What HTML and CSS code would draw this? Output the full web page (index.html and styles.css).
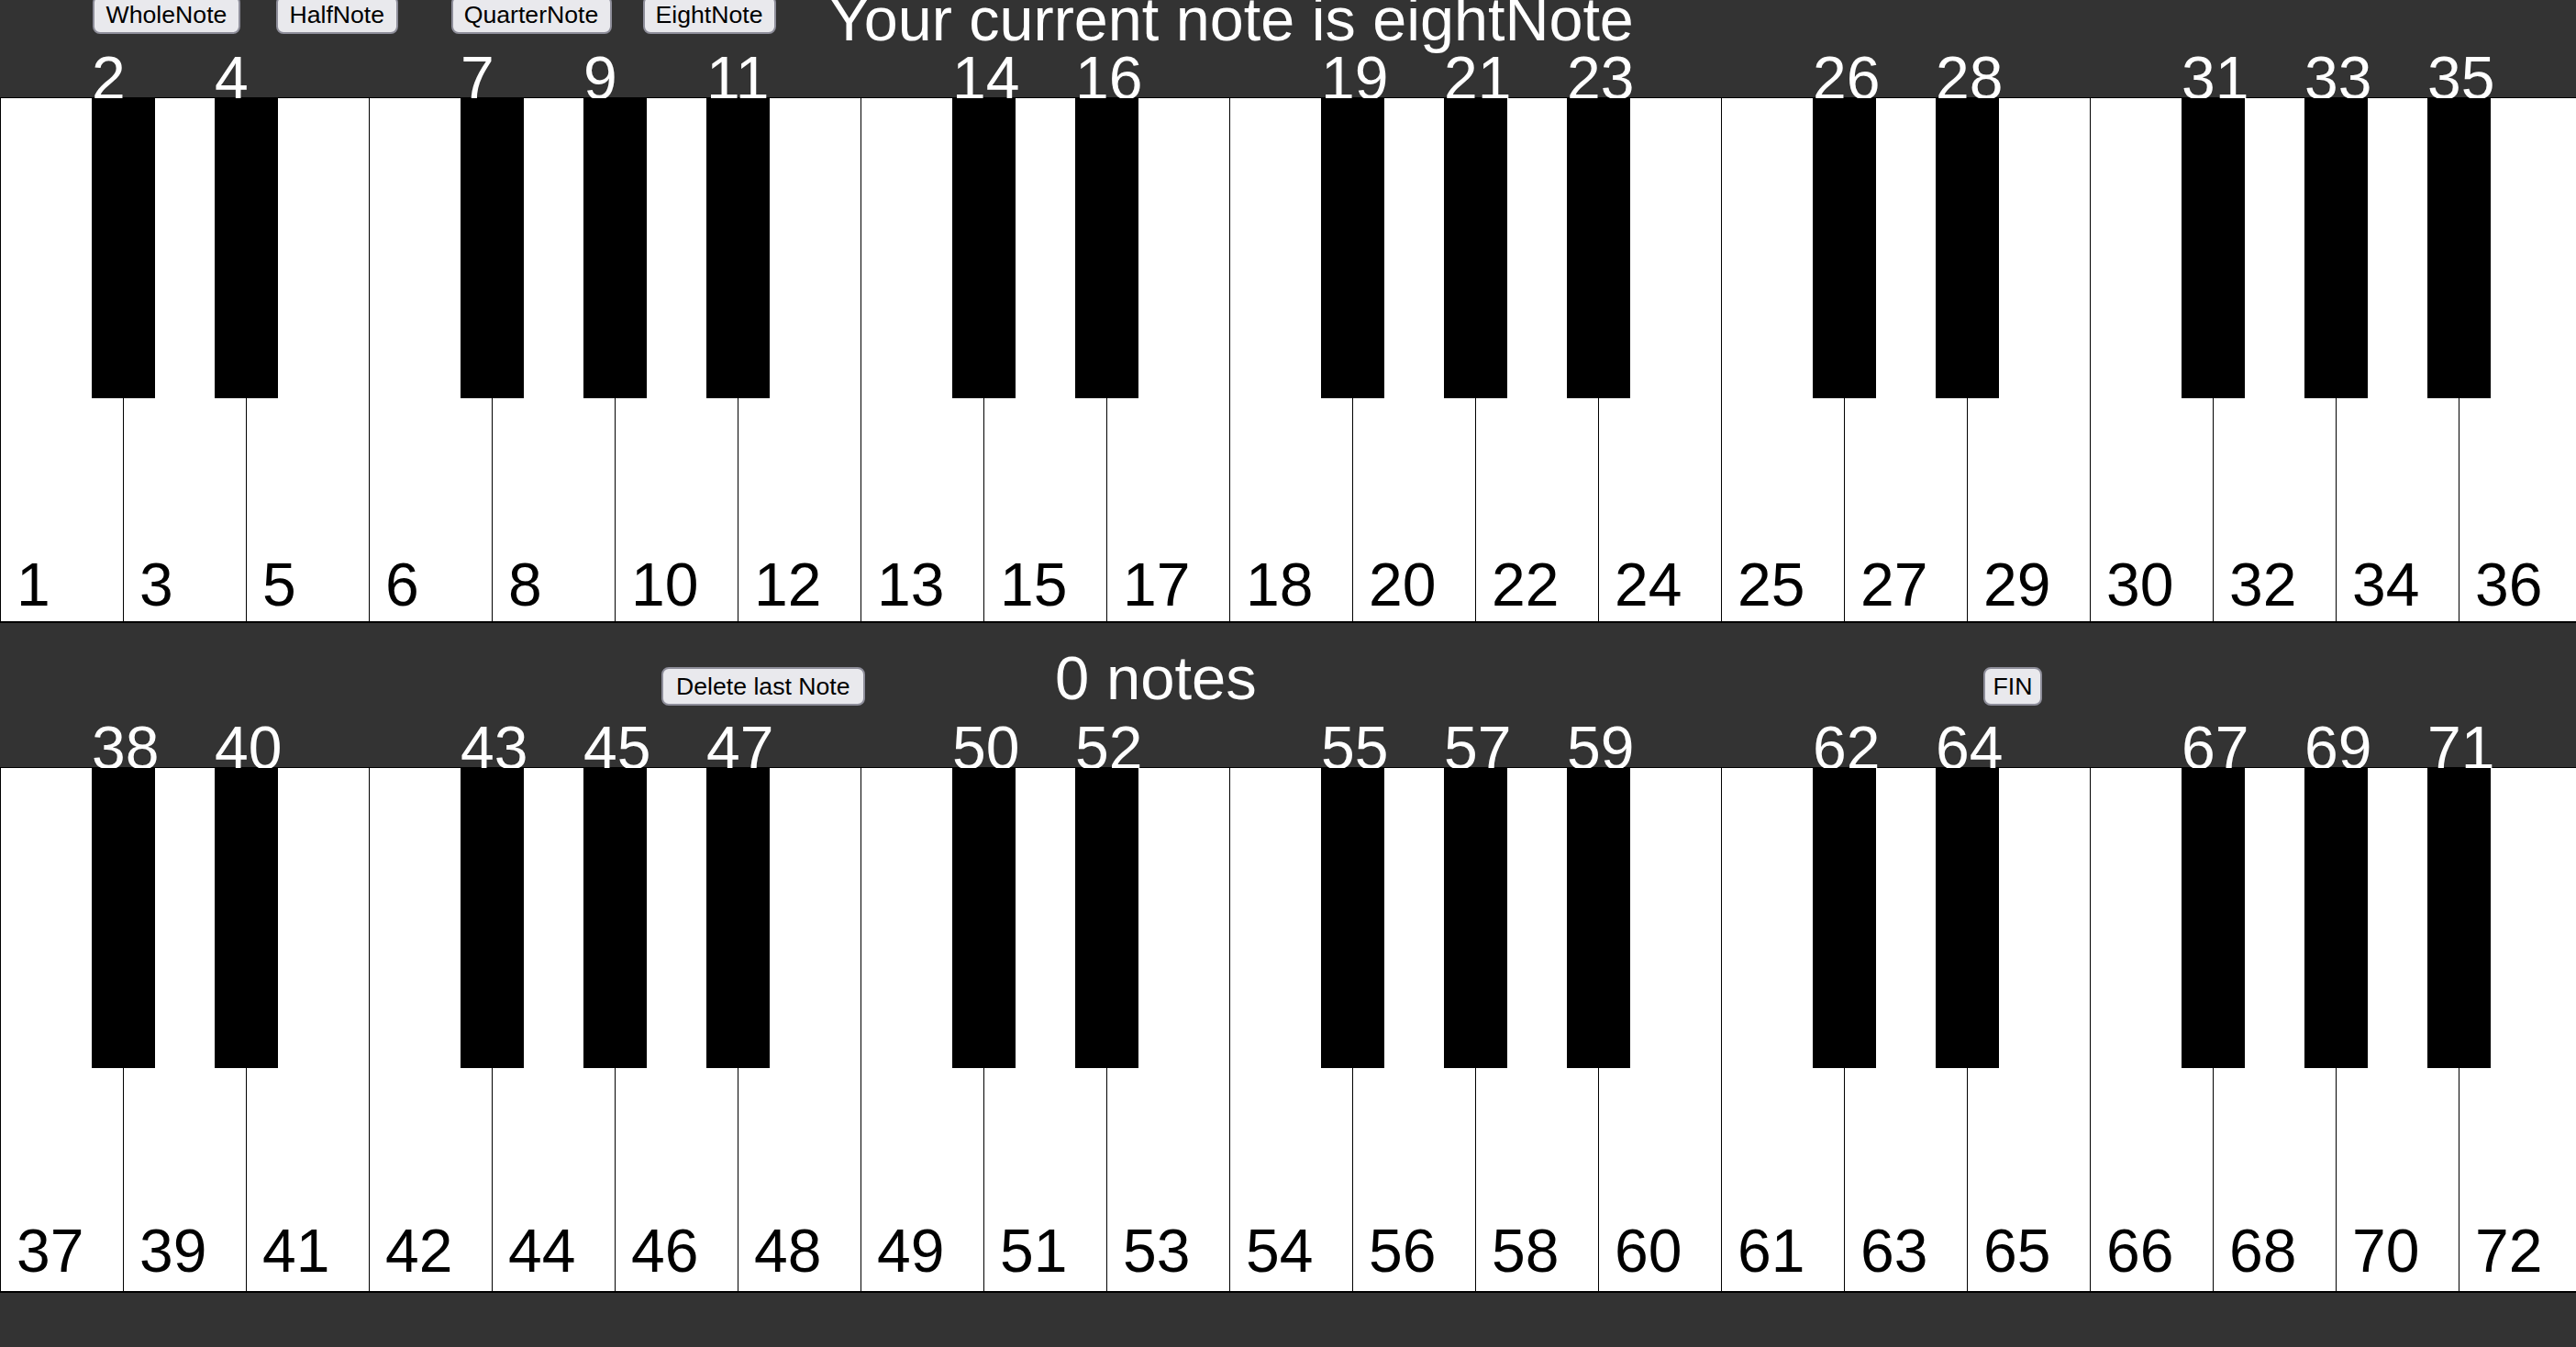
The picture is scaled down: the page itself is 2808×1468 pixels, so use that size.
FILE: index.html
```html
<!DOCTYPE html>
<html lang="en">
<head>
<meta charset="utf-8">
<title>Piano</title>
<link rel="stylesheet" href="styles.css">
</head>
<body>
<header class="topbar">
  <button class="btn btn-whole">WholeNote</button>
  <button class="btn btn-half">HalfNote</button>
  <button class="btn btn-quarter">QuarterNote</button>
  <button class="btn btn-eight">EightNote</button>
  <h1 class="title">Your current note is eightNote</h1>
</header>

<div class="keyboard kb-first">
  <div class="key"><span class="num">1</span><div class="black"><span class="bnum">2</span></div></div>
  <div class="key"><span class="num">3</span><div class="black"><span class="bnum">4</span></div></div>
  <div class="key"><span class="num">5</span></div>
  <div class="key"><span class="num">6</span><div class="black"><span class="bnum">7</span></div></div>
  <div class="key"><span class="num">8</span><div class="black"><span class="bnum">9</span></div></div>
  <div class="key"><span class="num">10</span><div class="black"><span class="bnum">11</span></div></div>
  <div class="key"><span class="num">12</span></div>
  <div class="key"><span class="num">13</span><div class="black"><span class="bnum">14</span></div></div>
  <div class="key"><span class="num">15</span><div class="black"><span class="bnum">16</span></div></div>
  <div class="key"><span class="num">17</span></div>
  <div class="key"><span class="num">18</span><div class="black"><span class="bnum">19</span></div></div>
  <div class="key"><span class="num">20</span><div class="black"><span class="bnum">21</span></div></div>
  <div class="key"><span class="num">22</span><div class="black"><span class="bnum">23</span></div></div>
  <div class="key"><span class="num">24</span></div>
  <div class="key"><span class="num">25</span><div class="black"><span class="bnum">26</span></div></div>
  <div class="key"><span class="num">27</span><div class="black"><span class="bnum">28</span></div></div>
  <div class="key"><span class="num">29</span></div>
  <div class="key"><span class="num">30</span><div class="black"><span class="bnum">31</span></div></div>
  <div class="key"><span class="num">32</span><div class="black"><span class="bnum">33</span></div></div>
  <div class="key"><span class="num">34</span><div class="black"><span class="bnum">35</span></div></div>
  <div class="key"><span class="num">36</span></div>
</div>

<div class="midbar">
  <button class="btn btn-delete">Delete last Note</button>
  <div class="count">0 notes</div>
  <button class="btn btn-fin">FIN</button>
</div>

<div class="keyboard kb-second">
  <div class="key"><span class="num">37</span><div class="black"><span class="bnum">38</span></div></div>
  <div class="key"><span class="num">39</span><div class="black"><span class="bnum">40</span></div></div>
  <div class="key"><span class="num">41</span></div>
  <div class="key"><span class="num">42</span><div class="black"><span class="bnum">43</span></div></div>
  <div class="key"><span class="num">44</span><div class="black"><span class="bnum">45</span></div></div>
  <div class="key"><span class="num">46</span><div class="black"><span class="bnum">47</span></div></div>
  <div class="key"><span class="num">48</span></div>
  <div class="key"><span class="num">49</span><div class="black"><span class="bnum">50</span></div></div>
  <div class="key"><span class="num">51</span><div class="black"><span class="bnum">52</span></div></div>
  <div class="key"><span class="num">53</span></div>
  <div class="key"><span class="num">54</span><div class="black"><span class="bnum">55</span></div></div>
  <div class="key"><span class="num">56</span><div class="black"><span class="bnum">57</span></div></div>
  <div class="key"><span class="num">58</span><div class="black"><span class="bnum">59</span></div></div>
  <div class="key"><span class="num">60</span></div>
  <div class="key"><span class="num">61</span><div class="black"><span class="bnum">62</span></div></div>
  <div class="key"><span class="num">63</span><div class="black"><span class="bnum">64</span></div></div>
  <div class="key"><span class="num">65</span></div>
  <div class="key"><span class="num">66</span><div class="black"><span class="bnum">67</span></div></div>
  <div class="key"><span class="num">68</span><div class="black"><span class="bnum">69</span></div></div>
  <div class="key"><span class="num">70</span><div class="black"><span class="bnum">71</span></div></div>
  <div class="key"><span class="num">72</span></div>
</div>
</body>
</html>
```

FILE: styles.css
```css
* {
  box-sizing: border-box;
}

html, body {
  margin: 0;
  padding: 0;
  background: #333333;
  font-family: "Liberation Sans", Arial, sans-serif;
  overflow: hidden;
}

/* ---------- bars ---------- */
.topbar {
  height: 106px;
  display: flex;
  align-items: flex-start;
}

.midbar {
  height: 157px;
  display: flex;
  align-items: flex-start;
}

.btn {
  height: 42px;
  padding: 0;
  border: 2px solid #8e8e9a;
  border-radius: 8px;
  background: #e9e9ed;
  color: #000;
  font-family: "Liberation Sans", Arial, sans-serif;
  font-size: 26.67px;
  line-height: 1;
  text-align: center;
  white-space: nowrap;
  flex: none;
}

.topbar .btn {
  margin-top: -5px;
}

.btn-whole { margin-left: 101px; width: 161px; }
.btn-half { margin-left: 39px; width: 132.5px; }
.btn-quarter { margin-left: 58px; width: 175px; }
.btn-eight { margin-left: 34px; width: 145px; }

.title {
  margin: -12.5px 0 0 58px;
  font-size: 66.5px;
  line-height: 66px;
  font-weight: normal;
  color: #fff;
  white-space: nowrap;
}

.midbar .btn {
  margin-top: 48px;
}

.btn-delete { margin-left: 721px; width: 221.5px; }
.btn-fin { margin-left: 792px; width: 64.5px; }

.count {
  margin: 27px 0 0 207.5px;
  font-size: 67px;
  line-height: 66px;
  color: #fff;
  white-space: nowrap;
  flex: none;
}

/* ---------- keyboard ---------- */
.keyboard {
  display: flex;
  height: 573px;
  border-top: 1px solid #000;
  border-bottom: 2px solid #000;
  background: #fff;
}

.key {
  position: relative;
  flex: none;
  width: 134px;
  background: #fff;
  border-left: 1px solid #000;
  padding-left: 17px;
  font-size: 66px;
  line-height: 66px;
  color: #000;
}

.kb-first .key {
  padding-top: 497px;
}

.kb-second .key {
  padding-top: 493px;
}

.num {
  display: block;
  white-space: nowrap;
}

.black {
  position: absolute;
  top: 0;
  right: -35px;
  width: 69px;
  height: 327px;
  background: #000;
  z-index: 1;
}

.bnum {
  position: absolute;
  left: 0;
  bottom: 100%;
  height: 60px;
  padding-top: 5px;
  overflow: hidden;
  font-size: 66px;
  line-height: 66px;
  color: #fff;
  white-space: nowrap;
}
```
